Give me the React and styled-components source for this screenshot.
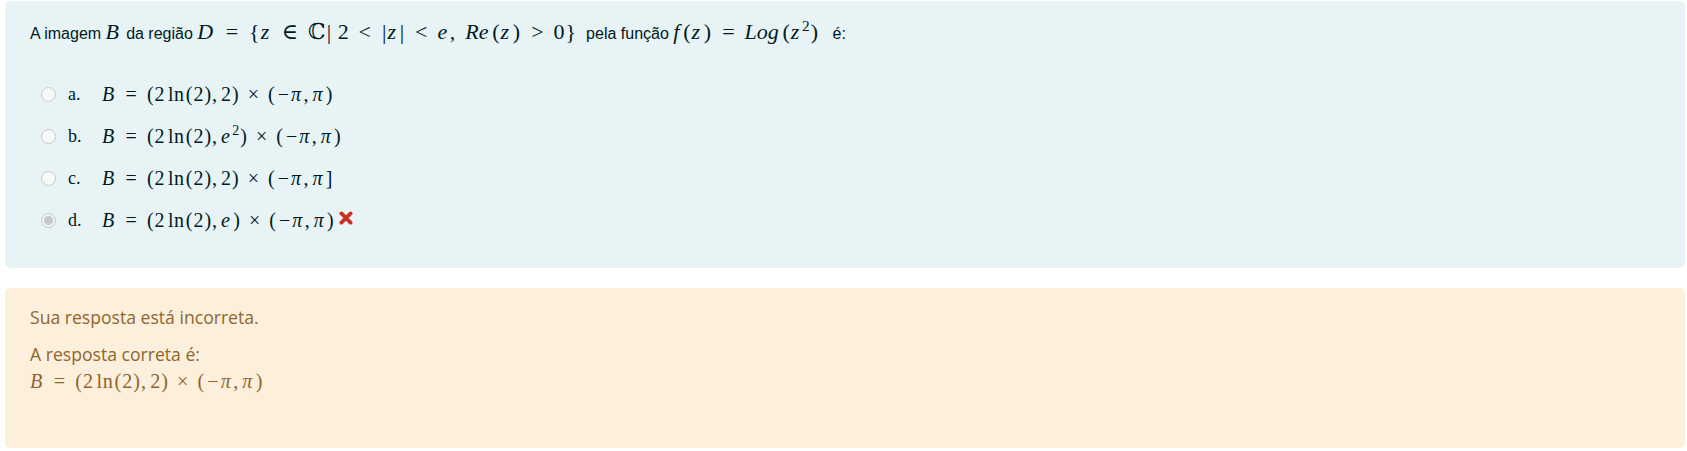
import React from "react";
import styled, { createGlobalStyle } from "styled-components";

const GlobalStyle = createGlobalStyle`
  html, body {
    margin: 0;
    background: #ffffff;
  }
`;

const Page = styled.div`
  display: flex;
  flex-direction: column;
  gap: 20px;
  padding: 1px 2px 3px 5px;
`;

const Formulation = styled.div`
  background: #e7f3f5;
  color: #001a1e;
  border-radius: 5px;
  height: 267px;
  box-sizing: border-box;
  padding: 18px 25px 0;
  font-family: "Liberation Sans", Arial, sans-serif;
  font-size: 16px;
`;

const QText = styled.div`
  line-height: 26px;
  white-space: pre;
`;

const Options = styled.div`
  margin-top: 26px;
  padding-left: 11px;
  display: flex;
  flex-direction: column;
`;

const Row = styled.div`
  display: flex;
  align-items: center;
  height: 42px;
`;

const Radio = styled.span`
  width: 15px;
  height: 15px;
  box-sizing: border-box;
  border-radius: 50%;
  border: 1px solid #c6cacb;
  background: ${(p) => (p.checked ? "#f2f2f2" : "#f7f8f8")};
  display: flex;
  align-items: center;
  justify-content: center;
  &::after {
    content: "";
    width: 9px;
    height: 9px;
    border-radius: 50%;
    background: ${(p) => (p.checked ? "#c6c8c9" : "transparent")};
  }
`;

const Letter = styled.span`
  font-family: "Liberation Serif", "Times New Roman", serif;
  font-size: 18px;
  width: 34px;
  margin-left: 12px;
`;

const Cross = styled.svg`
  width: 14px;
  height: 14px;
  margin-left: 4px;
  margin-top: -4px;
`;

const Outcome = styled.div`
  background: #fcefdc;
  color: #8e662e;
  border-radius: 5px;
  height: 160px;
  box-sizing: border-box;
  padding: 17px 25px 0;
  font-family: "Open Sans", "Noto Sans", sans-serif;
  font-size: 17.6px;
`;

const Para = styled.div`
  line-height: 24px;
  margin-bottom: ${(p) => p.gap || 0}px;
`;

const MathSpan = styled.span`
  font-family: "Liberation Serif", "Times New Roman", "DejaVu Serif", serif;
  font-size: ${(p) => p.size || 22}px;
  white-space: nowrap;
`;

const V = styled.i`
  font-style: italic;
  margin-right: 0.12em;
`;

const Rel = styled.span`
  margin: 0 0.45em;
`;

const Bin = styled.span`
  margin: 0 0.4em;
`;

const Minus = styled.span`
  padding: 0 0.1em;
`;

const Dl = styled.span`
  padding: 0 0.05em;
`;

const Sup = styled.sup`
  font-size: 0.7em;
  vertical-align: 0.55em;
  line-height: 0;
`;

const Comma = styled.span`
  margin-right: 0.2em;
`;

const Fn = styled.span`
  margin-left: 0.17em;
  letter-spacing: 0.03em;
`;

const Answer = ({ upper, close, size }) => (
  <MathSpan size={size}>
    <V>B</V>
    <Rel>=</Rel>
    <Dl>(</Dl>2<Fn>ln</Fn>
    <Dl>(</Dl>2<Dl>)</Dl>
    <Comma>,</Comma>
    {upper}
    <Dl>)</Dl>
    <Bin>×</Bin>
    <Dl>(</Dl>
    <Minus>−</Minus>
    <V>π</V>
    <Comma>,</Comma>
    <V>π</V>
    <Dl>{close}</Dl>
  </MathSpan>
);

const options = [
  { letter: "a.", upper: "2", close: ")" },
  {
    letter: "b.",
    upper: (
      <>
        <V>e</V>
        <Sup>2</Sup>
      </>
    ),
    close: ")",
  },
  { letter: "c.", upper: "2", close: "]" },
  { letter: "d.", upper: <V>e</V>, close: ")", checked: true, wrong: true },
];

export default function App() {
  return (
    <>
      <GlobalStyle />
      <Page>
        <Formulation>
          <QText>
            A imagem{" "}
            <MathSpan>
              <V>B</V>
            </MathSpan>{" "}
            da região{" "}
            <MathSpan>
              <V>D</V>
              <Rel>=</Rel>
              <Dl>{"{"}</Dl>
              <V>z</V>
              <Rel>∈</Rel>ℂ<Dl>|</Dl> 2<Rel>&lt;</Rel>
              <Dl>|</Dl>
              <V>z</V>
              <Dl>|</Dl>
              <Rel>&lt;</Rel>
              <V>e</V>
              <Comma>,</Comma>
              {"  "}
              <V>Re</V>
              <Dl>(</Dl>
              <V>z</V>
              <Dl>)</Dl>
              <Rel>&gt;</Rel>0<Dl>{"}"}</Dl>
            </MathSpan>
            {"  "}pela função{" "}
            <MathSpan>
              <V>f</V>
              <Dl>(</Dl>
              <V>z</V>
              <Dl>)</Dl>
              <Rel>=</Rel>
              <V>Log</V>
              <Dl>(</Dl>
              <V>z</V>
              <Sup>2</Sup>
              <Dl>)</Dl>
            </MathSpan>
            {"   "}é:
          </QText>
          <Options>
            {options.map((o) => (
              <Row key={o.letter}>
                <Radio checked={o.checked} />
                <Letter>{o.letter}</Letter>
                <Answer upper={o.upper} close={o.close} size={20} />
                {o.wrong && (
                  <Cross viewBox="0 0 14 14">
                    <path
                      d="M2.4 2.4 L11.6 11.6 M11.6 2.4 L2.4 11.6"
                      stroke="#ca3120"
                      strokeWidth="3.8"
                      strokeLinecap="round"
                    />
                  </Cross>
                )}
              </Row>
            ))}
          </Options>
        </Formulation>
        <Outcome>
          <Para gap={13}>Sua resposta está incorreta.</Para>
          <Para gap={3}>A resposta correta é:</Para>
          <Para>
            <Answer upper="2" close=")" size={20.2} />
          </Para>
        </Outcome>
      </Page>
    </>
  );
}
